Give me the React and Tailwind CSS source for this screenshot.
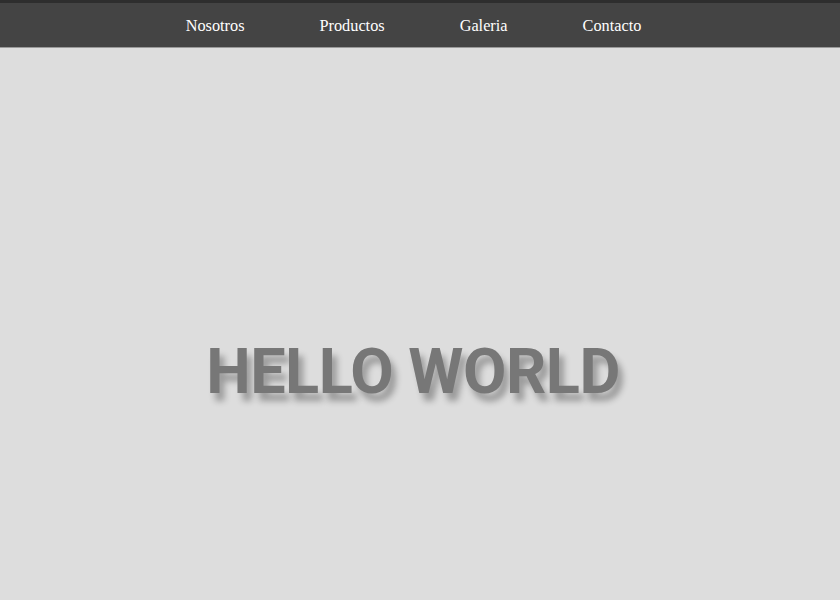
export default function App() {
  const items = ["Nosotros", "Productos", "Galeria", "Contacto"];
  return (
    <div className="min-h-[600px] bg-[#dddddd] flex flex-col">
      <nav className="h-[48px] bg-[#444444] border-t-[3px] border-t-[#2e2e2e] border-b border-b-[#9a9a9a] flex items-center justify-center pr-[13px]">
        <ul className="flex gap-[75px] pt-[2px]" style={{ fontFamily: '"Liberation Serif", serif' }}>
          {items.map((t) => (
            <li key={t} className="text-white text-[16.3px] leading-none">{t}</li>
          ))}
        </ul>
      </nav>
      <div className="flex justify-center pr-[14px] pt-[292px]">
        <h1
          className="text-[#777777] text-[63px] font-bold leading-none tracking-[-0.5px] [text-shadow:5px_8px_6px_rgba(0,0,0,0.3)]"
          style={{ fontFamily: 'Roboto, sans-serif' }}
        >
          HELLO WORLD
        </h1>
      </div>
    </div>
  );
}
